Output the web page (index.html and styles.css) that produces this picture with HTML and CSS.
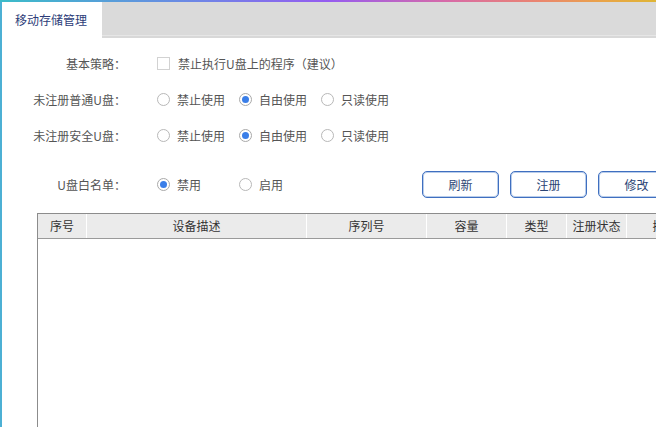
FILE: index.html
```html
<!DOCTYPE html>
<html lang="zh-CN">
<head>
<meta charset="utf-8">
<title>移动存储管理</title>
<link rel="stylesheet" href="styles.css">
</head>
<body>
<div class="frame">
  <div class="topbar"></div>
  <div class="main">
    <div class="tabs">
      <div class="tab active">移动存储管理</div>
      <div class="tab-rest"></div>
    </div>
    <div class="content">
      <div class="row">
        <div class="label">基本策略：</div>
        <div class="controls">
          <span class="check"></span><span class="opt-text">禁止执行U盘上的程序（建议）</span>
        </div>
      </div>
      <div class="row">
        <div class="label">未注册普通U盘：</div>
        <div class="controls">
          <span class="opt"><span class="radio"></span>禁止使用</span>
          <span class="opt"><span class="radio on"></span>自由使用</span>
          <span class="opt"><span class="radio"></span>只读使用</span>
        </div>
      </div>
      <div class="row">
        <div class="label">未注册安全U盘：</div>
        <div class="controls">
          <span class="opt"><span class="radio"></span>禁止使用</span>
          <span class="opt"><span class="radio on"></span>自由使用</span>
          <span class="opt"><span class="radio"></span>只读使用</span>
        </div>
      </div>
      <div class="row row-white">
        <div class="label">U盘白名单：</div>
        <div class="controls">
          <span class="opt"><span class="radio on"></span>禁用</span>
          <span class="opt"><span class="radio"></span>启用</span>
        </div>
        <div class="buttons">
          <button class="btn">刷新</button>
          <button class="btn">注册</button>
          <button class="btn">修改</button>
        </div>
      </div>
      <div class="table">
        <div class="thead">
          <div class="th c1">序号</div>
          <div class="th c2">设备描述</div>
          <div class="th c3">序列号</div>
          <div class="th c4">容量</div>
          <div class="th c5">类型</div>
          <div class="th c6">注册状态</div>
          <div class="th c7">插入时间</div>
        </div>
        <div class="tbody"></div>
      </div>
    </div>
  </div>
</div>
</body>
</html>
```
FILE: styles.css
```css
html, body {
  margin: 0;
  padding: 0;
  width: 656px;
  height: 427px;
  overflow: hidden;
  background: #ffffff;
}
body {
  font-family: "Noto Sans CJK SC", "Liberation Sans", sans-serif;
  font-size: 12px;
  color: #555555;
}
.frame {
  display: flex;
  flex-direction: column;
  width: 656px;
  height: 427px;
}
.topbar {
  height: 2px;
  flex: none;
  background: linear-gradient(90deg, #3bbcc9 0%, #6e86e6 30%, #955cf0 50%, #d76aa8 68%, #ea8570 82%, #e9a448 92%, #dfb535 100%);
}
.main {
  flex: 1;
  display: flex;
  flex-direction: column;
  border-left: 2px solid #4cb0d4;
  min-height: 0;
}
.tabs {
  display: flex;
  height: 36px;
  flex: none;
}
.tab {
  width: 100px;
  box-sizing: border-box;
  padding-left: 13px;
  line-height: 35px;
  color: #2c3c78;
  background: #ffffff;
}
.tab-rest {
  flex: 1;
  background: linear-gradient(180deg, #dadada 0, #dadada 33px, #e6e6e6 33px, #e6e6e6 34px, #d8d8d8 34px);
}
.content {
  flex: 1;
  display: flex;
  flex-direction: column;
  padding-top: 7px;
  min-height: 0;
}
.row {
  display: flex;
  align-items: center;
  height: 36px;
}
.row-white {
  margin-top: 13px;
}
.label {
  width: 124px;
  text-align: right;
  color: #555555;
  flex: none;
}
.controls {
  display: flex;
  align-items: center;
  margin-left: 31px;
}
.check {
  width: 11px;
  height: 11px;
  border: 1px solid #d2d2d2;
  background: #ffffff;
  margin-right: 8px;
  margin-top: 1px;
}
.opt-text {
  color: #555555;
}
.opt {
  display: flex;
  align-items: center;
  width: 82px;
  color: #555555;
}
.radio {
  box-sizing: border-box;
  width: 13px;
  height: 13px;
  border: 1px solid #b8b8b8;
  border-radius: 50%;
  background: #ffffff;
  margin-right: 7px;
  display: flex;
  align-items: center;
  justify-content: center;
}
.radio.on {
  border-color: #a9a9a9;
}
.radio.on::after {
  content: "";
  width: 7px;
  height: 7px;
  border-radius: 50%;
  background: #3a7ee8;
}
.buttons {
  display: flex;
  gap: 11px;
  margin-left: 101px;
  flex: none;
}
.btn {
  width: 77px;
  height: 27px;
  box-sizing: border-box;
  border: 1px solid #3f6fc0;
  border-radius: 5px;
  background: #ffffff;
  color: #2c4575;
  font-family: "Noto Sans CJK SC", "Liberation Sans", sans-serif;
  font-size: 12px;
  padding: 0;
  flex: none;
  box-shadow: inset 0 0 0 1px #b9cdea;
}
.table {
  margin-top: 11px;
  margin-left: 35px;
  flex: 1;
  display: flex;
  flex-direction: column;
  border-top: 1px solid #8c8c8c;
  border-left: 1px solid #8c8c8c;
  min-height: 0;
}
.thead {
  display: flex;
  height: 24px;
  flex: none;
  background: #ebebeb;
  border-bottom: 1px solid #9a9a9a;
}
.th {
  box-sizing: border-box;
  flex: none;
  text-align: center;
  line-height: 24px;
  color: #333333;
  border-left: 1px solid #ffffff;
  white-space: nowrap;
  overflow: hidden;
}
.c1 { width: 48px; border-left: none; }
.c2 { width: 220px; }
.c3 { width: 120px; }
.c4 { width: 80px; }
.c5 { width: 60px; }
.c6 { width: 60px; }
.c7 { width: 100px; }
.tbody {
  flex: 1;
  background: #ffffff;
}
```
